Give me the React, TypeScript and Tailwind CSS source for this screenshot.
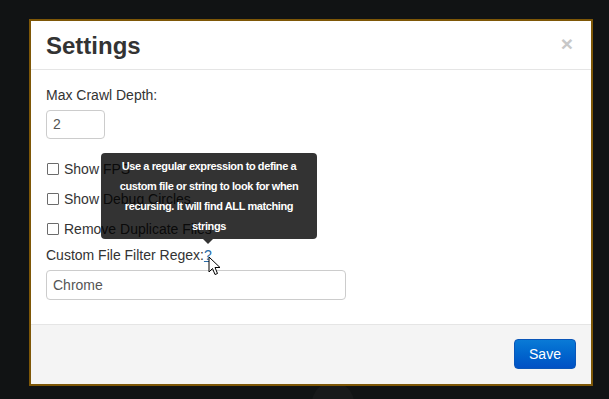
import React from "react";

const font = { fontFamily: '"Liberation Sans", Arial, Helvetica, sans-serif' };

function Checkbox({ label }: { label: string }) {
  return (
    <div className="flex items-center h-5 mb-[10px]">
      <span className="ml-[1px] w-[12px] h-[12px] border border-[#6b6b6b] bg-white rounded-[1px]" />
      <span className="ml-[5px] text-[14px] leading-5 text-[#333]">{label}</span>
    </div>
  );
}

export default function App() {
  return (
    <div
      className="relative w-[609px] h-[399px] overflow-hidden bg-[#111314] pt-[19px] pl-[29px]"
      style={font}
    >
      {/* faint background element */}
      <div className="absolute left-[312px] top-[382px] w-[42px] h-[42px] rounded-full bg-[#18191a]" />
      <div className="relative w-[564px] h-[367px] border-2 border-[#7e5707] bg-white flex flex-col">
        {/* header */}
        <div className="flex items-center justify-between h-[49px] px-[15px] border-b border-[#e5e5e5]">
          <h1 className="text-[24px] font-bold text-[#333] leading-[26px] pt-[1px]">Settings</h1>
          <span className="text-[21px] font-bold text-[#c8c8c8] leading-none mr-[3px] -mt-[4px]">×</span>
        </div>
        {/* body */}
        <div className="flex-1 px-[15px] pt-[15px] border-b border-[#e5e5e5]">
          <div className="text-[14px] leading-5 text-[#333]">Max Crawl Depth:</div>
          <div className="mt-[5px] w-[59px] h-[29px] border border-[#ccc] rounded-[4px] flex items-center px-[6px] text-[14px] text-[#555]">
            2
          </div>
          <div className="mt-[20px]">
            <Checkbox label="Show FPS" />
            <Checkbox label="Show Debug Circles" />
            <Checkbox label="Remove Duplicate Files" />
          </div>
          <div className="-mt-[4px] text-[14px] leading-5 text-[#333]">
            Custom File Filter Regex:<span className="text-[#2a6ca8] underline">?</span>
          </div>
          <div className="mt-[5px] w-[300px] h-[30px] border border-[#ccc] rounded-[4px] flex items-center px-[6px] text-[14px] text-[#555]">
            Chrome
          </div>
        </div>
        {/* footer */}
        <div className="h-[59px] bg-[#f4f4f4] flex items-start justify-end pr-[15px] pt-[14px]">
          <button className="w-[62px] h-[30px] rounded-[4px] border border-[#0a56b8] bg-gradient-to-b from-[#0a7ad6] to-[#0150c4] text-white text-[14px]">
            Save
          </button>
        </div>

        {/* tooltip */}
        <div className="absolute left-[70px] top-[132px] w-[216px] h-[86px] rounded-[4px] bg-[rgba(0,0,0,0.8)] text-white text-[11px] font-bold leading-5 text-center pt-[3px] tracking-[-0.4px]">
          Use a regular expression to define a
          <br />
          custom file or string to look for when
          <br />
          recursing. It will find ALL matching
          <br />
          strings
          <div className="absolute left-[102px] -bottom-[5px] w-0 h-0 border-l-[5px] border-r-[5px] border-t-[5px] border-l-transparent border-r-transparent border-t-[rgba(0,0,0,0.8)]" />
        </div>

        {/* cursor */}
        <svg
          className="absolute left-[177px] top-[235px]"
          width="14"
          height="21"
          viewBox="0 0 14 21"
        >
          <path
            d="M1 1 L1 16 L4.5 12.5 L7 18.5 L9.5 17.5 L7 11.5 L12 11.5 Z"
            fill="white"
            stroke="black"
            strokeWidth="1"
            strokeLinejoin="miter"
          />
        </svg>
      </div>
    </div>
  );
}
